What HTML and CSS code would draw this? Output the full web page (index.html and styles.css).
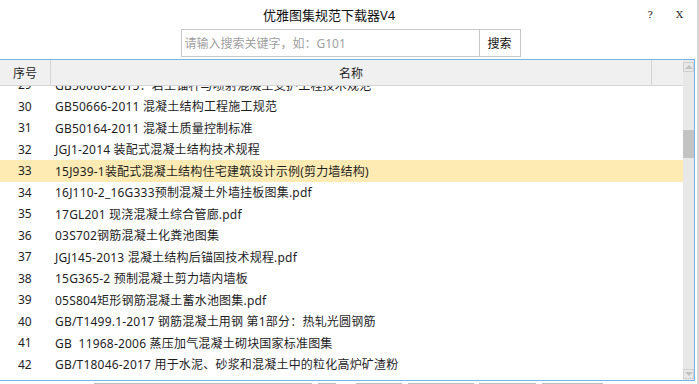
FILE: index.html
```html
<!DOCTYPE html>
<html lang="zh-CN">
<head>
  <meta charset="UTF-8" />
  <meta name="viewport" content="width=device-width, initial-scale=1.0"/>
  <title>优雅图集规范下载器V4</title>
  <link rel="stylesheet" href="styles.css">
</head>
<body>
  <div class="window">
    <div class="titlebar">
      <div class="title">优雅图集规范下载器V4</div>
      <div class="win-btns">
        <span class="help">?</span>
        <span class="close">X</span>
      </div>
    </div>

    <div class="search-row">
      <input type="text" class="search-input" placeholder="请输入搜索关键字，如：G101" />
      <button class="search-btn">搜索</button>
    </div>

    <div class="table-frame">
      <div class="grid">
        <div class="grid-head">
          <div class="col-no">序号</div>
          <div class="col-name">名称</div>
          <div class="col-rest"></div>
        </div>
        <div class="grid-body">
          <div class="rows">
            <div class="row"><span class="no">29</span><span class="name">GB50086-2015：岩土锚杆与喷射混凝土支护工程技术规范</span></div>
            <div class="row"><span class="no">30</span><span class="name">GB50666-2011 混凝土结构工程施工规范</span></div>
            <div class="row"><span class="no">31</span><span class="name">GB50164-2011 混凝土质量控制标准</span></div>
            <div class="row"><span class="no">32</span><span class="name">JGJ1-2014 装配式混凝土结构技术规程</span></div>
            <div class="row selected"><span class="no">33</span><span class="name">15J939-1装配式混凝土结构住宅建筑设计示例(剪力墙结构)</span></div>
            <div class="row"><span class="no">34</span><span class="name">16J110-2_16G333预制混凝土外墙挂板图集.pdf</span></div>
            <div class="row"><span class="no">35</span><span class="name">17GL201 现浇混凝土综合管廊.pdf</span></div>
            <div class="row"><span class="no">36</span><span class="name">03S702钢筋混凝土化粪池图集</span></div>
            <div class="row"><span class="no">37</span><span class="name">JGJ145-2013 混凝土结构后锚固技术规程.pdf</span></div>
            <div class="row"><span class="no">38</span><span class="name">15G365-2 预制混凝土剪力墙内墙板</span></div>
            <div class="row"><span class="no">39</span><span class="name">05S804矩形钢筋混凝土蓄水池图集.pdf</span></div>
            <div class="row"><span class="no">40</span><span class="name">GB/T1499.1-2017 钢筋混凝土用钢 第1部分：热轧光圆钢筋</span></div>
            <div class="row"><span class="no">41</span><span class="name">GB&nbsp; 11968-2006 蒸压加气混凝土砌块国家标准图集</span></div>
            <div class="row"><span class="no">42</span><span class="name">GB/T18046-2017 用于水泥、砂浆和混凝土中的粒化高炉矿渣粉</span></div>
          </div>
        </div>
      </div>
      <div class="scrollbar">
        <div class="arrow arrow-up"></div>
        <div class="track"><div class="thumb"></div></div>
        <div class="arrow arrow-down"></div>
      </div>
    </div>

    <div class="pager">
      <div class="pg pg-1"></div>
      <div class="pg pg-2"></div>
      <div class="pg pg-3"></div>
      <div class="pg pg-4"></div>
      <div class="pg pg-5"></div>
      <div class="pg pg-6"></div>
    </div>
  </div>
</body>
</html>
```

FILE: styles.css
```css
html, body {
  margin: 0;
  padding: 0;
  background: #fff;
}

body {
  font-family: "Noto Sans", "Noto Sans CJK SC", sans-serif;
  font-size: 12px;
  color: #1e1e1e;
  overflow: hidden;
}

.window {
  width: 697px;
  height: 384px;
  border-right: 2px solid #d6d6d6;
  overflow: hidden;
}

/* title bar */
.titlebar {
  height: 29px;
  display: grid;
  grid-template-columns: 263px auto 1fr;
  align-items: center;
}

.title {
  grid-column: 2;
  font-size: 13px;
  color: #111;
  margin-top: -1px;
}

.win-btns {
  grid-column: 3;
  justify-self: end;
  display: flex;
  gap: 23px;
  padding-right: 14px;
  font-family: "DejaVu Serif", serif;
  font-size: 10px;
  color: #222;
}

/* search */
.search-row {
  display: flex;
  justify-content: center;
  padding-left: 4px;
  height: 28px;
}

.search-input {
  width: 299px;
  height: 28px;
  box-sizing: border-box;
  border: 1px solid #c8c8c8;
  padding: 0 3px;
  font-family: inherit;
  font-size: 12px;
  outline: none;
}

.search-input::placeholder {
  color: #a0a0a0;
}

.search-btn {
  width: 41px;
  height: 28px;
  box-sizing: border-box;
  border: 1px solid #c8c8c8;
  border-left: none;
  background: #fff;
  font-family: inherit;
  font-size: 12px;
  color: #111;
  padding: 0;
}

/* table */
.table-frame {
  margin-top: 2px;
  margin-left: -1px;
  width: 694px;
  height: 320px;
  border: 1px solid #72b6ee;
  display: flex;
}

.grid {
  width: 683px;
  display: flex;
  flex-direction: column;
}

.grid-head {
  height: 25px;
  background: #f0f0f0;
  border-bottom: 1px solid #d4d4d4;
  display: flex;
  align-items: center;
  flex-shrink: 0;
}

.grid-head > div {
  height: 100%;
  display: flex;
  align-items: center;
  justify-content: center;
  box-sizing: border-box;
}

.col-no {
  width: 51px;
  border-right: 1px solid #d4d4d4;
}

.col-name {
  width: 601px;
  border-right: 1px solid #d4d4d4;
}

.col-rest {
  flex: 1;
}

.grid-body {
  flex: 1;
  overflow: hidden;
}

.rows {
  margin-top: -12px;
}

.row {
  height: 21.5px;
  display: flex;
  align-items: center;
  white-space: nowrap;
}

.row.selected {
  background: #fdebb3;
}

.no {
  width: 37px;
  padding-left: 18px;
  flex-shrink: 0;
}

.name {
  letter-spacing: 0.2px;
}

/* scrollbar */
.scrollbar {
  width: 11px;
  background: #e8e8e8;
  display: flex;
  flex-direction: column;
}

.arrow {
  height: 10px;
  margin: 2px 0 0;
  box-sizing: border-box;
  border: 1px solid #d0d0d0;
  display: flex;
  align-items: center;
  justify-content: center;
}

.arrow-up::after,
.arrow-down::after {
  content: "";
  width: 0;
  height: 0;
  border-left: 4px solid transparent;
  border-right: 4px solid transparent;
}

.arrow-up::after {
  border-bottom: 4px solid #c2c2c2;
}

.arrow-down {
  margin: 0 0 1px;
}

.arrow-down::after {
  border-top: 4px solid #c2c2c2;
}

.track {
  flex: 1;
}

.thumb {
  margin-top: 58px;
  height: 28px;
  background: #c3c3c3;
}

/* bottom controls (cut off) */
.pager {
  display: flex;
  margin-top: 2px;
  padding-left: 94px;
}

.pg {
  height: 1px;
  background: #bdbdbd;
}

.pg-1 { width: 218px; }
.pg-2 { width: 18px; margin-left: 6px; }
.pg-3 { width: 46px; margin-left: 20px; }
.pg-4 { width: 66px; margin-left: 6px; }
.pg-5 { width: 57px; margin-left: 5px; }
.pg-6 { width: 61px; margin-left: 6px; }
```
